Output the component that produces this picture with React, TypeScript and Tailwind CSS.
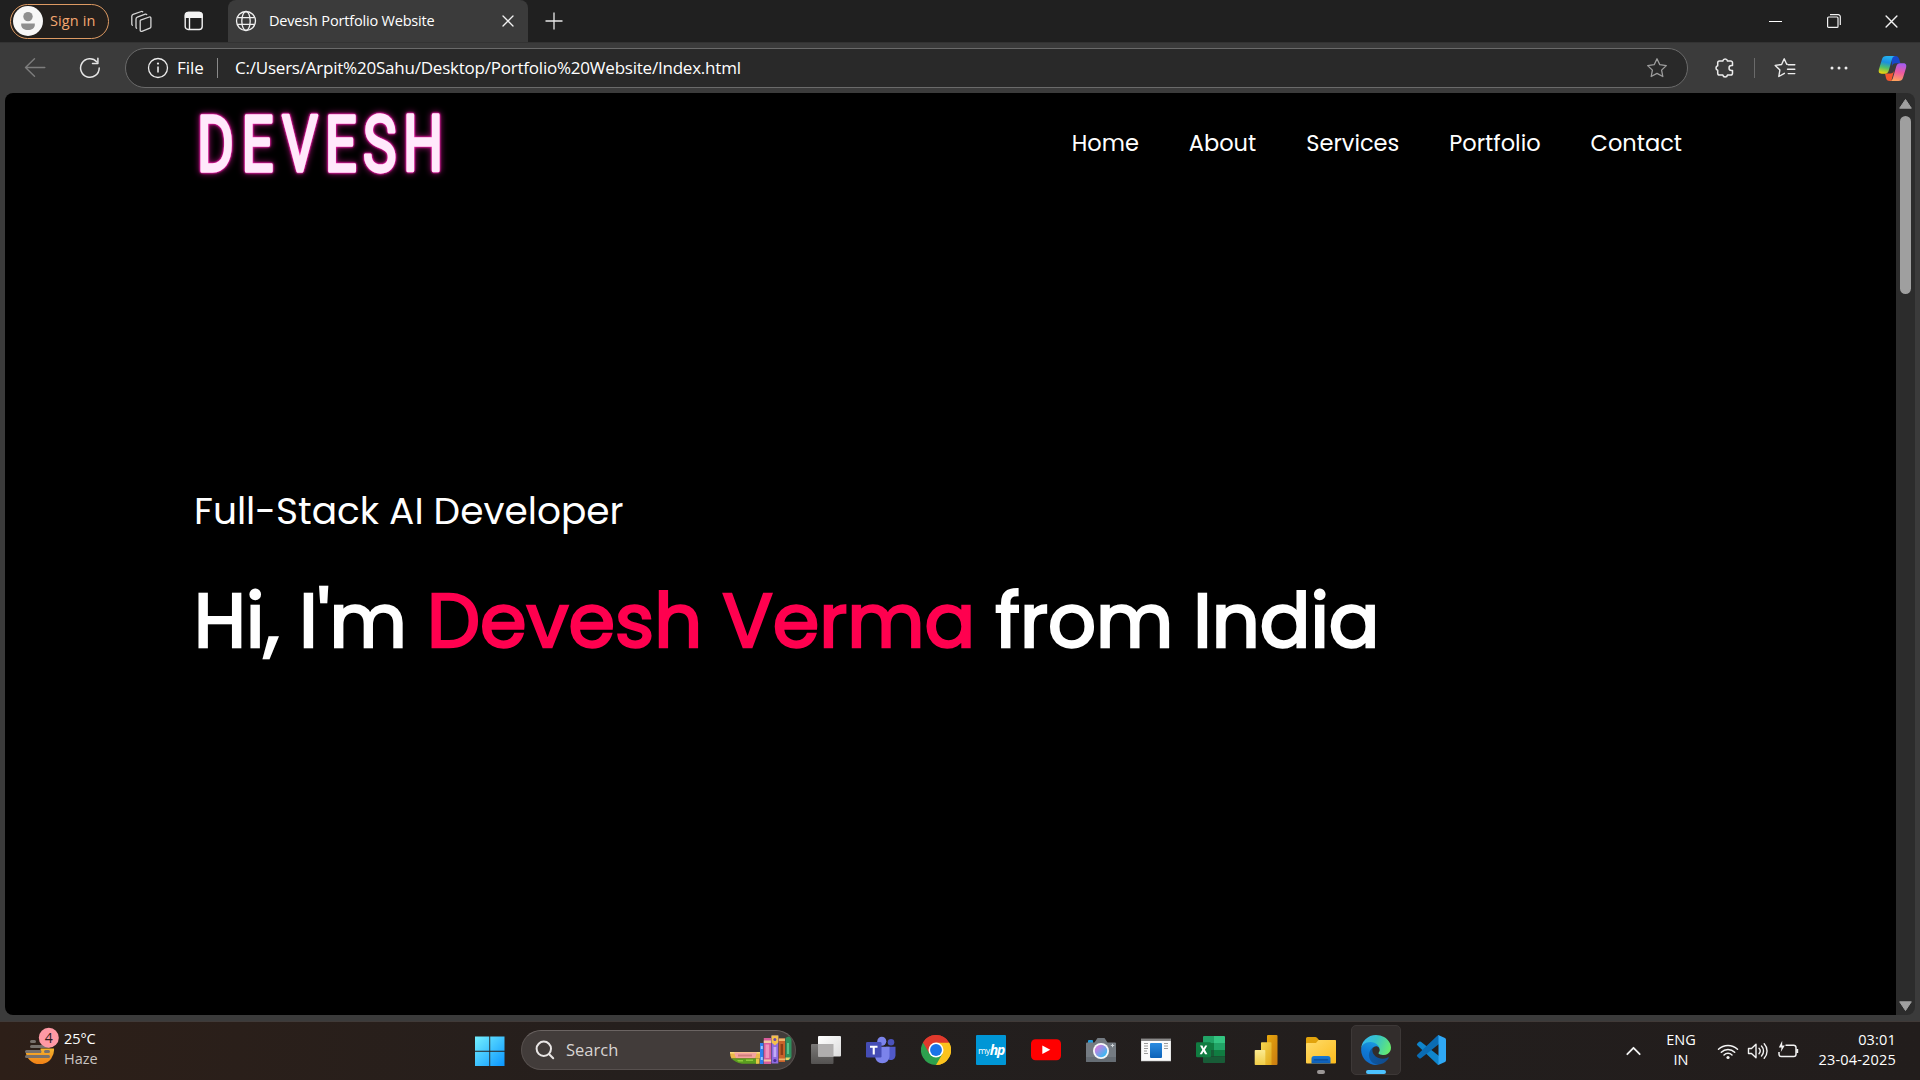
import type { ReactNode } from "react";

/* ---------- Browser icons ---------- */

const AvatarIcon = () => (
  <svg className="size-[30px] shrink-0" viewBox="0 0 30 30">
    <circle cx="15" cy="15" r="15" fill="#f7f7f7" />
    <circle cx="15" cy="10.6" r="4.7" fill="#8f8f8f" />
    <path d="M8.2 17.5h13.6v1.5c0 3-3 5-6.8 5s-6.8-2-6.8-5z" fill="#8f8f8f" />
  </svg>
);

const WorkspacesIcon = () => (
  <svg className="size-[24px]" viewBox="0 0 24 24" fill="none" stroke="#d6d6d6" strokeWidth="1.3" strokeLinejoin="round" strokeLinecap="round">
    <path d="M11.5 11.2l8.8-3.2a1.2 1.2 0 0 1 1.6 1.1v8.6a1.6 1.6 0 0 1-1 1.5l-8 3.1a1.2 1.2 0 0 1-1.7-1.1v-8.6a1.5 1.5 0 0 1 .3-1.4z" />
    <path d="M7.6 19.2a1.6 1.6 0 0 1-.6-1.3v-8a2 2 0 0 1 1.3-1.8l8-2.9a1.4 1.4 0 0 1 1.4.3" />
    <path d="M3.4 16.2a1.6 1.6 0 0 1-.6-1.3V7.2a2 2 0 0 1 1.3-1.8l8.2-2.9a1.4 1.4 0 0 1 1.4.3" />
  </svg>
);

const TabActionsIcon = () => (
  <svg className="size-[20px]" viewBox="0 0 20 20" fill="none" stroke="#f2f2f2" strokeWidth="1.4">
    <rect x="1.2" y="1.5" width="17" height="17" rx="3" />
    <path d="M1.5 4.5a3 3 0 0 1 3-3h10.5a3 3 0 0 1 3 3v1.8h-16.5z" fill="#f2f2f2" />
    <path d="M5.5 6.500v12" />
  </svg>
);

const GlobeIcon = () => (
  <svg className="size-[22px] shrink-0" viewBox="0 0 22 22" fill="none" stroke="#f0f0f0" strokeWidth="1.3">
    <circle cx="11" cy="11" r="9.5" />
    <ellipse cx="11" cy="11" rx="4.2" ry="9.5" />
    <path d="M2.3 7.7h17.400M2.3 14.3h17.4" />
  </svg>
);

const CloseIcon = ({ size }: { size: "sm" | "md" }) => (
  <svg className={size === "sm" ? "size-[12px]" : "size-[13px]"} viewBox="0 0 12 12" fill="none" stroke="#f2f2f2" strokeWidth="1.3" strokeLinecap="round">
    <path d="M1 1l10 10M11 1L1 11" />
  </svg>
);

const PlusIcon = () => (
  <svg className="size-[18px]" viewBox="0 0 18 18" fill="none" stroke="#e8e8e8" strokeWidth="1.3">
    <path d="M9 .5v17M.5 9h17" />
  </svg>
);

const BackIcon = () => (
  <svg className="size-[22px]" viewBox="0 0 22 22" fill="none" stroke="#7d7d7d" strokeWidth="1.4" strokeLinecap="round" strokeLinejoin="round">
    <path d="M20.8 10.5H1.5M10.5 1.8L1.5 10.5l9 8.700" />
  </svg>
);

const ReloadIcon = () => (
  <svg className="size-[22px]" viewBox="0 0 22 22" fill="none" stroke="#e6e6e6" strokeWidth="1.5" strokeLinecap="round" strokeLinejoin="round">
    <path d="M20.2 11a9.3 9.3 0 1 1-2.3-6.1" />
    <path d="M18.9 1.3v5.2h-5.4" />
  </svg>
);

const InfoIcon = () => (
  <svg className="size-[22px] shrink-0" viewBox="0 0 22 22" fill="none" stroke="#ececec" strokeWidth="1.3">
    <circle cx="11" cy="11" r="9.5" />
    <path d="M11 9.5v6" strokeWidth="1.6" />
    <circle cx="11" cy="6.6" r="1.1" fill="#ececec" stroke="none" />
  </svg>
);

const StarIcon = () => (
  <svg className="size-[22px]" viewBox="0 0 22 22" fill="none" stroke="#9d9d9d" strokeWidth="1.3" strokeLinejoin="round">
    <path d="M11 1.8l2.8 5.9 6.500.9-4.7 4.5 1.2 6.4-5.8-3.100-5.8 3.100 1.200-6.400L1.7 8.600l6.500-.9z" />
  </svg>
);

const ExtensionsIcon = () => (
  <svg className="size-[22px]" viewBox="0 0 22 22" fill="none" stroke="#ececec" strokeWidth="1.5" strokeLinejoin="round">
    <path d="M5.500 4h3.300a2.400 2.400 0 0 1 4.700 0h3.200a1.800 1.800 0 0 1 1.800 1.800v2.700h-1a2.500 2.500 0 0 0 0 5h1v2.700a1.800 1.800 0 0 1-1.800 1.800h-3.200a2.400 2.400 0 0 1-4.700 0H5.500a1.800 1.800 0 0 1-1.800-1.800v-2.900a2.400 2.400 0 0 1 0-4.600V5.800A1.800 1.800 0 0 1 5.500 4z" />
  </svg>
);

const FavoritesIcon = () => (
  <svg className="size-[22px]" viewBox="0 0 22 22" fill="none" stroke="#ececec" strokeWidth="1.4" strokeLinejoin="round" strokeLinecap="round">
    <path d="M13.3 7.2h-.6L10.2 1.8 7.6 7.5l-6.4.9 4.7 4.5-1.1 6.6 5.6-3.2" />
    <path d="M14.2 7.8h6.6M13.5 12.2h7.3M14.2 16.6h6.6" />
  </svg>
);

const MoreIcon = () => (
  <svg className="h-[4px] w-[18px]" viewBox="0 0 18 4" fill="#ececec">
    <circle cx="2" cy="2" r="1.5" />
    <circle cx="9" cy="2" r="1.5" />
    <circle cx="16" cy="2" r="1.5" />
  </svg>
);

const CopilotIcon = () => (
  <svg className="h-[27px] w-[29px]" viewBox="0 0 29 27">
    <defs>
      <linearGradient id="cpA" x1="0.5" y1="0" x2="0.3" y2="1">
        <stop offset="0" stopColor="#25b2f0" />
        <stop offset=".35" stopColor="#1a8fe0" />
        <stop offset=".65" stopColor="#4fc06a" />
        <stop offset="1" stopColor="#f2d40a" />
      </linearGradient>
      <linearGradient id="cpB" x1="0.6" y1="0" x2="0.4" y2="1">
        <stop offset="0" stopColor="#a45cf0" />
        <stop offset=".5" stopColor="#ee5a9e" />
        <stop offset="1" stopColor="#ffa35c" />
      </linearGradient>
    </defs>
    <path d="M13.5 1h3.7c2.3 0 3.3 1.2 3.9 3l1.3 4.2h-4.8c-2 0-3.1 1.2-3.7 3z" fill="#1848c9" />
    <path d="M7 18.5h5.5c1.9 0 3-1 3.6-3L13.3 26h-1.5c-2.4 0-3.3-1.2-3.8-3z" fill="#f4552e" />
    <path d="M8.5 1h8.3c-1.6.3-2.3 1.6-2.8 3.3l-3.3 11.4c-.6 2-1.8 3-3.7 3H3.8C1 18.7.2 16.8 1 14L4 4.2C4.7 2 6 1 8.5 1z" fill="url(#cpA)" />
    <path d="M20.5 26h-8.3c1.6-.3 2.3-1.6 2.8-3.3l3.3-11.4c.6-2 1.8-3 3.7-3h3.2c2.8 0 3.6 1.9 2.8 4.7l-3 9.8C24.3 25 23 26 20.5 26z" fill="url(#cpB)" />
  </svg>
);

/* ---------- Taskbar icons ---------- */

const WeatherIcon = () => (
  <svg className="h-[38px] w-[36px] shrink-0" viewBox="24 1026 36 38">
    <defs>
      <linearGradient id="sun" x1="0" y1="0" x2="0" y2="1">
        <stop offset="0" stopColor="#f5b52e" />
        <stop offset="1" stopColor="#f07f16" />
      </linearGradient>
    </defs>
    <path d="M40.500 1048.5h13.500a14.300 14.300 0 0 1-28.200 4.500h14.700z" fill="url(#sun)" />
    <path d="M31.5 1041.5h3M31.5 1046.5h17M26.5 1051.5h13.500M45.5 1051.5h3M26.5 1056.5h22" stroke="#77716c" strokeWidth="3" strokeLinecap="round" />
    <circle cx="48.8" cy="1037.7" r="10" fill="#ff99a4" />
    <text x="48.8" y="1043" textAnchor="middle" fontSize="14" fontFamily="Open Sans, sans-serif" fill="#2b1a1c">4</text>
  </svg>
);

const WindowsIcon = () => (
  <svg className="size-[30px]" viewBox="0 0 30 30">
    <defs>
      <linearGradient id="win" x1="0" y1="0" x2="1" y2="1">
        <stop offset="0" stopColor="#74f0ff" />
        <stop offset="1" stopColor="#0a96ff" />
      </linearGradient>
    </defs>
    <path d="M0 .5h14.300v14.300H0zM15.200.5h14.300v14.300H15.200zM0 15.700h14.300V30H0zM15.200 15.700h14.300V30H15.200z" fill="url(#win)" />
  </svg>
);

const SearchIcon = () => (
  <svg className="size-[20px] shrink-0" viewBox="0 0 20 20" fill="none" stroke="#e9e6e5" strokeWidth="2" strokeLinecap="round">
    <circle cx="8.8" cy="8.8" r="7.2" />
    <path d="M14.2 14.2l4 4" />
  </svg>
);

const BooksIcon = () => (
  <svg className="h-[30px] w-[63px] shrink-0" viewBox="0 0 63 30">
    <path d="M0 17h30v6.500H1.500Q0 21 0 17z" fill="#eab84a" />
    <path d="M0 17h30v1.500H0z" fill="#f8dc80" />
    <path d="M4 17.5h23l-2 5.500H6z" fill="#f4a3a0" />
    <path d="M8 19.500h14v2H8z" fill="#d17f7c" />
    <path d="M1.500 23.500H28v5.300H12Q5 27.500 1.500 23.500z" fill="#5b9e1f" />
    <path d="M7 25h6v1.500H8.500zM16 24.500h7v1.500h-7z" fill="#8ecb3a" />
    <path d="M26 23.500h3.500v5.300H26z" fill="#e7c545" />
    <path d="M30 8h3.500v21H30z" fill="#2d7ff0" />
    <path d="M30.800 11h2v3h-2zM30.800 22h2v3h-2z" fill="#9cc7ff" />
    <path d="M33.800 3h7.200v26h-7.200z" fill="#d95d9c" />
    <path d="M33.800 5.500H41v2.500h-7.200zM33.800 24.500H41v2h-7.200z" fill="#f5c9a0" />
    <path d="M35.500 9.500h3.700v13.500h-3.700z" fill="#ee93bd" />
    <path d="M41.500.5h6.800v28h-6.800z" fill="#8f6be0" />
    <path d="M41.500.5h6.800v7l-3.400 3-3.400-3z" fill="#f3c14b" />
    <circle cx="44.900" cy="4.500" r="1.500" fill="#6b4aa8" />
    <path d="M43.500 12h2.800v10h-2.800z" fill="#c3abf5" />
    <circle cx="44.900" cy="25.500" r="1.600" fill="#4a2f96" />
    <path d="M48.800 3.500H55V27h-6.200z" fill="#c8632b" />
    <path d="M48.800 3.500H55v2.500h-6.200zM48.800 23.500H55v1.700h-6.200z" fill="#f0b46b" />
    <path d="M50.600 9h2.500v11h-2.500z" fill="#8c3d17" />
    <path d="M55.500 3q4.500-4 6 2v17q-1.500 4-6 3.500z" fill="#2f8f5d" />
    <path d="M57 8h2v11h-2z" fill="#57c08a" />
    <path d="M55.500 22.500h5l-2 2.500h-3z" fill="#e5d66a" />
  </svg>
);

const TaskViewIcon = () => (
  <svg className="size-[30px]" viewBox="0 0 30 30">
    <defs>
      <linearGradient id="tv" x1="0" y1="0" x2="1" y2="1">
        <stop offset="0" stopColor="#ffffff" />
        <stop offset="1" stopColor="#dcdcdc" />
      </linearGradient>
      <linearGradient id="tv2" x1="0" y1="0" x2="0" y2="1">
        <stop offset="0" stopColor="#7a7877" />
        <stop offset="1" stopColor="#545251" />
      </linearGradient>
    </defs>
    <rect x="0" y="9" width="22.5" height="20" rx="1" fill="url(#tv2)" />
    <rect x="7" y="1" width="23" height="20.5" rx="1" fill="url(#tv)" />
    <rect x="7" y="9" width="15.5" height="12.5" fill="#b0aeae" />
  </svg>
);

const TeamsIcon = () => (
  <svg className="size-[30px]" viewBox="0 0 30 30">
    <circle cx="25" cy="7.3" r="3.3" fill="#4b53bc" />
    <path d="M20 11.8h9.5V20c0 3-2 5-4.8 5-2.2 0-4.7-1.5-4.7-5z" fill="#5059c9" />
    <circle cx="15.8" cy="6.2" r="4.5" fill="#7b83eb" />
    <path d="M9 11.8h14.5v9c0 4.5-3 7.5-7.2 7.5S9 25.3 9 20.8z" fill="#7b83eb" />
    <rect x="0" y="7" width="15.5" height="15.5" rx="1.3" fill="#454db5" />
    <path d="M4 10.8h7.5v1.9H8.8v6.8H6.7v-6.8H4z" fill="#fff" />
  </svg>
);

const ChromeIcon = () => (
  <svg className="size-[30px]" viewBox="0 0 48 48">
    <path d="M24 24L3.215 12A24 24 0 0 1 44.785 12z" fill="#e0392c" />
    <path d="M24 24L44.785 12A24 24 0 0 1 24 48z" fill="#fcc31e" />
    <path d="M24 24v24A24 24 0 0 1 3.215 12z" fill="#2da04e" />
    <path d="M34.392 30L24 48A24 24 0 0 0 44.785 12H24z" fill="#fcc31e" />
    <path d="M3.215 12L13.608 30 24 48l10.392-18L24 24V12z" fill="#2da04e" />
    <path d="M3.215 12A24 24 0 0 1 44.785 12H24L13.608 30z" fill="#e0392c" />
    <circle cx="24" cy="24" r="12" fill="#fff" />
    <circle cx="24" cy="24" r="9.5" fill="#1a73e8" />
  </svg>
);

const MyHpIcon = () => (
  <div className="flex size-[30px] items-center justify-center rounded-[1px] bg-[#0096d6] text-white">
    <span className="font-['Open_Sans',sans-serif] text-[9px] leading-none tracking-[-0.5px]">my</span>
    <span className="font-['Open_Sans',sans-serif] text-[14px] font-bold italic leading-none tracking-[-1.2px]">hp</span>
  </div>
);

const YouTubeIcon = () => (
  <svg className="size-[30px]" viewBox="0 0 30 30">
    <rect y="4.3" width="30" height="21" rx="4.5" fill="#ff0000" />
    <path d="M11.3 10.5l8 4.3-8 4.3z" fill="#fff" />
  </svg>
);

const CameraIcon = () => (
  <svg className="size-[30px]" viewBox="0 0 30 30">
    <defs>
      <linearGradient id="cam" x1="0" y1="0" x2="1" y2="1">
        <stop offset=".2" stopColor="#c77fe0" />
        <stop offset=".8" stopColor="#41b6f0" />
      </linearGradient>
    </defs>
    <rect x="2" y="5" width="5" height="4" rx="1" fill="#1e9de0" />
    <path d="M0 8.5q0-1 1-1h7.5l3-4.500h7l3 4.500H29q1 0 1 1V26q0 1-1 1H1q-1 0-1-1z" fill="#747b82" />
    <path d="M0 22h30v4q0 1-1 1H1q-1 0-1-1z" fill="#666d74" />
    <circle cx="15" cy="16" r="8" fill="#f5f7f9" />
    <circle cx="15" cy="16" r="6.2" fill="url(#cam)" />
    <path d="M26.5 8.8v3.4M24.8 10.5h3.4" stroke="#cfd4d8" strokeWidth="1" />
  </svg>
);

const ReaderIcon = () => (
  <svg className="size-[30px]" viewBox="0 0 30 30">
    <defs>
      <linearGradient id="rd" x1="0" y1="0" x2="0" y2="1">
        <stop offset="0" stopColor="#2a8be0" />
        <stop offset="1" stopColor="#0c62b8" />
      </linearGradient>
    </defs>
    <rect y="4" width="30" height="22" fill="#fbfbfb" stroke="#b9b9b9" strokeWidth=".6" />
    <path d="M0 4h30v2H0z" fill="#8b8a8a" />
    <rect x="9" y="8" width="12" height="15" rx="1" fill="url(#rd)" />
    <path d="M3 8.5h4M3 11h4M3 13.5h4M3 16h3M3 18.5h4M23 8.5h4M23 11h4M23 13.5h4" stroke="#9a9a9a" strokeWidth="1" />
  </svg>
);

const ExcelIcon = () => (
  <svg className="size-[30px]" viewBox="0 0 30 30">
    <path d="M7 2q0-1 1-1h10v7H7z" fill="#21a366" />
    <path d="M18 1h10q1 0 1 1v6H18z" fill="#33c481" />
    <path d="M7 8h11v7H7z" fill="#107c41" />
    <path d="M18 8h11v7H18z" fill="#21a366" />
    <path d="M7 15h11v6.5H7z" fill="#185c37" />
    <path d="M18 15h11v6.5H18z" fill="#107c41" />
    <path d="M7 21.5h22V27q0 1-1 1H8q-1 0-1-1z" fill="#185c37" />
    <rect y="7.3" width="15" height="15" rx="1.2" fill="#107c41" />
    <path d="M4 10.5h2.4l1.3 2.7 1.4-2.7h2.2L8.9 14.8l2.5 4.4H9l-1.500-2.8L6 19.2H3.7l2.6-4.4z" fill="#fff" />
  </svg>
);

const PowerBiIcon = () => (
  <svg className="size-[30px]" viewBox="0 0 30 30">
    <defs>
      <linearGradient id="pb1" x1="0" y1="0" x2="1" y2="1">
        <stop offset="0" stopColor="#e8a90c" />
        <stop offset="1" stopColor="#c87a12" />
      </linearGradient>
      <linearGradient id="pb2" x1="0" y1="0" x2="1" y2="1">
        <stop offset="0" stopColor="#f6d751" />
        <stop offset="1" stopColor="#e0a81c" />
      </linearGradient>
      <linearGradient id="pb3" x1="0" y1="0" x2="0" y2="1">
        <stop offset="0" stopColor="#fbea90" />
        <stop offset="1" stopColor="#f0cd48" />
      </linearGradient>
    </defs>
    <path d="M16 1q0-1 1-1h8.5q1 0 1 1v28q0 1-1 1H16z" fill="url(#pb1)" />
    <path d="M10 8q0-.8.8-.8h8.9q.8 0 .8.8v22H10z" fill="url(#pb2)" />
    <path d="M3.7 15.8q0-.8.8-.8H13.5q.8 0 .8.8V30H4.5q-.8 0-.8-.8z" fill="url(#pb3)" />
  </svg>
);

const ExplorerIcon = () => (
  <svg className="size-[30px]" viewBox="0 0 30 30">
    <defs>
      <linearGradient id="fx" x1="0" y1="0" x2="1" y2="1">
        <stop offset="0" stopColor="#ffdc6b" />
        <stop offset="1" stopColor="#fcbb1c" />
      </linearGradient>
      <linearGradient id="fb" x1="0" y1="0" x2="0" y2="1">
        <stop offset="0" stopColor="#1a7ad6" />
        <stop offset="1" stopColor="#0d5cb4" />
      </linearGradient>
    </defs>
    <path d="M0 3.5Q0 2 1.5 2h7.7q1 0 1.8.8L13 5h15.5Q30 5 30 6.5V15H0z" fill="#e2a30c" />
    <path d="M0 9q0-1 1-1h9l2.5-3H29q1 0 1 1v21.5q0 1-1 1H1q-1 0-1-1z" fill="url(#fx)" />
    <path d="M5.5 23.5Q5.5 21 8 21h14q2.500 0 2.500 2.500v5H5.500z" fill="url(#fb)" />
    <path d="M8.5 24.8h13" stroke="#0a4b98" strokeWidth="1.3" strokeLinecap="round" />
  </svg>
);

const EdgeIcon = () => (
  <svg className="size-[30px]" viewBox="0 0 256 256">
    <defs>
      <linearGradient id="e1" x1="0" y1=".5" x2="1" y2=".7">
        <stop offset="0" stopColor="#0c59a4" />
        <stop offset="1" stopColor="#114a8b" />
      </linearGradient>
      <linearGradient id="e2" x1=".6" y1="0" x2=".3" y2="1">
        <stop offset="0" stopColor="#1b9de2" />
        <stop offset=".5" stopColor="#0f78d4" />
        <stop offset="1" stopColor="#1068c4" />
      </linearGradient>
      <linearGradient id="e3" x1="0" y1=".3" x2="1" y2=".6">
        <stop offset="0" stopColor="#35b8f1" />
        <stop offset=".45" stopColor="#36c3c9" />
        <stop offset="1" stopColor="#66eb6e" />
      </linearGradient>
    </defs>
    <path d="M231 190.5c-3.4 1.8-6.9 3.4-10.5 4.7a101.5 101.5 0 0 1-35.7 6.4c-47 0-88-32.3-88-73.8.1-11.6 6.5-22.2 16.6-27.7-42.5 1.8-53.4 46.1-53.4 72 0 73.4 67.6 80.8 82.2 80.8 7.8 0 19.7-2.3 26.8-4.5l1.300-.5a128.300 128.300 0 0 0 66.600-52.700 4 4 0 0 0-5.900-4.700z" fill="url(#e1)" />
    <path d="M105.7 241.4a79.2 79.2 0 0 1-22.7-21.3A80.7 80.7 0 0 1 113.4 100c3.2-1.5 8.5-4.1 15.6-4 10.200.1 19.7 4.9 25.8 13 4.1 5.4 6.3 11.9 6.4 18.7 0-.2 24.5-79.6-80-79.6C37.3 48 1.2 89.7 1.2 126.2A130 130 0 0 0 13.3 182a128 128 0 0 0 156.4 67.1 75.5 75.5 0 0 1-64-7.7z" fill="url(#e2)" />
    <path d="M152.3 148.9c-.8 1-3.3 2.5-3.3 5.7 0 2.6 1.7 5.1 4.7 7.2 14.4 10 41.5 8.7 41.6 8.7 10.7 0 21.1-2.900 30.300-8.300a61.400 61.400 0 0 0 30.400-52.900c.3-22.400-8-37.300-11.300-43.900C223.500 23.900 177.700 0 128 0A128 128 0 0 0 0 126.200c.5-36.500 36.800-66 80-66 3.500 0 23.500.3 42 10.100 16.300 8.600 24.900 19 30.800 29.200 6.200 10.700 7.300 24.100 7.300 29.500 0 5.400-2.700 13.300-7.800 19.900z" fill="url(#e3)" />
  </svg>
);

const VsCodeIcon = () => (
  <svg className="size-[30px]" viewBox="0 0 30 30">
    <path d="M1.3 10.3Q.3 9.4 1.3 8.4l1.8-1.6q.9-.7 1.8 0L23 21v8.7q-.8.3-1.700-.5z" fill="#0f85cc" />
    <path d="M1.3 19.7q-1 .9 0 1.9l1.8 1.6q.9.7 1.8 0L23 9V.3q-.8-.3-1.7.5z" fill="#0a6cb4" />
    <path d="M22.8 29.8q-.9.2-1.6-.5 1.300.9 1.300-.9V1.600q0-1.800-1.300-.9.7-.7 1.600-.5l6.200 2.900q1 .5 1 1.600v20.600q0 1.100-1 1.600z" fill="#2fa8f5" />
  </svg>
);

const WifiIcon = () => (
  <svg className="h-[17px] w-[22px]" viewBox="0 0 22 17" fill="none" stroke="#f2f2f2" strokeWidth="1.5" strokeLinecap="round">
    <path d="M1.5 6.3a13.5 13.5 0 0 1 19 0M4.3 9.3a9.5 9.5 0 0 1 13.4 0M7 12a5.7 5.7 0 0 1 8 0" />
    <circle cx="11" cy="14.5" r="1.6" fill="#f2f2f2" stroke="none" />
  </svg>
);

const VolumeIcon = () => (
  <svg className="h-[18px] w-[22px]" viewBox="0 0 22 18" fill="none" stroke="#f2f2f2" strokeWidth="1.4" strokeLinecap="round" strokeLinejoin="round">
    <path d="M1.5 6.5h3L9 2.3v13.4l-4.500-4.200h-3z" />
    <path d="M12 6.3a4 4 0 0 1 0 5.4M14.5 4a7.2 7.2 0 0 1 0 10M17.2 1.8a10.5 10.5 0 0 1 0 14.4" />
  </svg>
);

const BatteryIcon = () => (
  <svg className="h-[20px] w-[23px]" viewBox="0 0 23 20" fill="none" stroke="#f2f2f2" strokeWidth="1.5" strokeLinejoin="round">
    <path d="M8.5 5.2h8.2a2.3 2.3 0 0 1 2.3 2.3v6.7a2.3 2.3 0 0 1-2.3 2.3H4.3A2.3 2.3 0 0 1 2 14.2V12" />
    <path d="M20.2 9v4" strokeWidth="2" />
    <path d="M5.2.8L1.8 7.5h2.7l-.7 4.5 4-6.5H5.2z" fill="#f2f2f2" stroke="none" />
  </svg>
);

/* ---------- Browser chrome ---------- */

const TitleBar = () => (
  <div className="flex h-[42px] bg-[#202020]">
    <div className="flex w-[228px] shrink-0 items-center pl-[10px]">
      <div className="flex h-[35px] w-[99px] items-center gap-[7px] rounded-full border-[1.5px] border-[#dd9a63] bg-[#231f1c] pl-[2px]">
        <AvatarIcon />
        <span className="whitespace-nowrap text-[14.5px] tracking-[0.1px] text-[#f3a770]">Sign in</span>
      </div>
      <div className="ml-[20px] flex"><WorkspacesIcon /></div>
      <div className="ml-[31px] flex"><TabActionsIcon /></div>
    </div>
    <div className="flex w-[300px] shrink-0 items-center rounded-t-[8px] bg-[#3b3b3b] pl-[7px] pr-[14px]">
      <GlobeIcon />
      <span className="ml-[12px] grow whitespace-nowrap text-[14.5px] tracking-[-0.18px] text-white">Devesh Portfolio Website</span>
      <CloseIcon size="sm" />
    </div>
    <div className="ml-[17px] flex items-center"><PlusIcon /></div>
    <div className="ml-auto flex items-center">
      <div className="mr-[45px] h-px w-[13px] bg-white" />
      <svg className="mr-[44px] size-[14px]" viewBox="0 0 14 14" fill="none" stroke="#f2f2f2" strokeWidth="1.2">
        <rect x=".6" y="3" width="10.4" height="10.4" rx="1" />
        <path d="M3 .7h8.2a2.1 2.1 0 0 1 2.1 2.1V11" />
      </svg>
      <div className="mr-[22px] flex"><CloseIcon size="md" /></div>
    </div>
  </div>
);

const ToolBar = () => (
  <div className="flex h-[51px] items-center border-t border-[#333333]">
    <div className="ml-[24px] flex"><BackIcon /></div>
    <div className="ml-[33px] flex"><ReloadIcon /></div>
    <div className="ml-[24px] flex h-[40px] w-[1563px] items-center rounded-full border border-[#6a6a6a] bg-[#292929] text-[17px] text-white">
      <div className="ml-[21px] flex"><InfoIcon /></div>
      <span className="ml-[8px] w-[27px]">File</span>
      <div className="ml-[13px] h-[20px] w-px bg-[#8a8a8a]" />
      <span className="ml-[17px] grow whitespace-nowrap tracking-[-0.22px]">C:/Users/Arpit%20Sahu/Desktop/Portfolio%20Website/Index.html</span>
      <div className="mr-[19px] flex"><StarIcon /></div>
    </div>
    <div className="ml-[26px] flex"><ExtensionsIcon /></div>
    <div className="ml-[18px] h-[20px] w-px bg-[#6a6a6a]" />
    <div className="ml-[19px] flex"><FavoritesIcon /></div>
    <div className="ml-[34px] flex"><MoreIcon /></div>
    <div className="ml-[30px] flex"><CopilotIcon /></div>
  </div>
);

/* ---------- Web page ---------- */

const NeonLogo = () => (
  <svg className="h-[80px] w-[260px] overflow-visible" viewBox="190 103 260 80">
    <g className="[filter:drop-shadow(0_0_1px_#ff1fb4)_drop-shadow(0_0_0.5px_#e0189c)_drop-shadow(0_0_3px_#96106a)]">
      <text
        transform="scale(0.73 1)"
        x="269.9 330.8 386.3 444.9 497.3 552.1"
        y="171.2"
        fontFamily="Roboto, sans-serif"
        fontSize="77"
        fill="#ffe9fb"
        stroke="#ffe9fb"
        strokeWidth="3.4"
        strokeLinejoin="round"
      >
        DEVESH
      </text>
    </g>
  </svg>
);

const navLinks = ["Home", "About", "Services", "Portfolio", "Contact"];

const Page = () => (
  <main className="grow overflow-hidden rounded-l-[8px] bg-black font-['Poppins','Inter',sans-serif] text-white">
    <header className="flex h-[100px] items-center justify-between pl-[185px] pr-[214px]">
      <NeonLogo />
      <nav className="flex gap-[50px] pt-[2px] text-[22.5px]">
        {navLinks.map((link) => (
          <a key={link}>{link}</a>
        ))}
      </nav>
    </header>
    <section className="pl-[189px] pt-[290px]">
      <p className="text-[37.5px] leading-[56px]">Full-Stack AI Developer</p>
      <h1 className="mt-[22px] whitespace-nowrap text-[75px] leading-[120px] [-webkit-text-stroke-width:2.5px]">
        Hi, I'm <span className="text-[#ff004f]">Devesh Verma</span> from India
      </h1>
    </section>
  </main>
);

const ScrollBar = () => (
  <div className="flex w-[19px] shrink-0 flex-col items-center rounded-r-[8px] bg-[#2c2c2c] pb-[4px] pt-[6px]">
    <svg className="h-[10px] w-[13px]" viewBox="0 0 13 10"><path d="M6.5.5L12.3 9.200H.7z" fill="#a0a0a0" stroke="#a0a0a0" strokeLinejoin="round" /></svg>
    <div className="mt-[7px] h-[178px] w-[11px] rounded-full bg-[#9f9f9f]" />
    <svg className="mt-auto h-[10px] w-[13px]" viewBox="0 0 13 10"><path d="M6.5 9.500L12.3.8H.7z" fill="#a0a0a0" stroke="#a0a0a0" strokeLinejoin="round" /></svg>
  </div>
);

/* ---------- Taskbar ---------- */

const apps: { name: string; icon: ReactNode; state?: "open" | "active" }[] = [
  { name: "Task view", icon: <TaskViewIcon /> },
  { name: "Teams", icon: <TeamsIcon /> },
  { name: "Chrome", icon: <ChromeIcon /> },
  { name: "myHP", icon: <MyHpIcon /> },
  { name: "YouTube", icon: <YouTubeIcon /> },
  { name: "Camera", icon: <CameraIcon /> },
  { name: "Reader", icon: <ReaderIcon /> },
  { name: "Excel", icon: <ExcelIcon /> },
  { name: "Power BI", icon: <PowerBiIcon /> },
  { name: "Explorer", icon: <ExplorerIcon />, state: "open" },
  { name: "Edge", icon: <EdgeIcon />, state: "active" },
  { name: "VS Code", icon: <VsCodeIcon /> },
];

const TaskBar = () => (
  <footer className="flex h-[59px] border-t border-[#403a38] bg-linear-to-r from-[#2d1f18] via-[#231f1e] via-40% to-[#221d1c] text-[14.5px] text-white">
    <div className="flex w-[475px] shrink-0 pl-[24px] pt-[4px]">
      <WeatherIcon />
      <div className="ml-[4px] pt-[3px] leading-[20px]">
        <p className="tracking-[-0.1px]">25°C</p>
        <p className="text-[#c9c4c1]">Haze</p>
      </div>
    </div>
    <div className="flex w-[46px] shrink-0 pt-[13.5px]"><WindowsIcon /></div>
    <div className="mt-[8px] flex h-[40px] w-[275px] shrink-0 items-center rounded-full border border-[#57504e] border-t-[#6b6462] bg-[#423c3a] pl-[13px]">
      <SearchIcon />
      <span className="ml-[11px] grow text-[16.5px] text-[#d8d4d2]">Search</span>
      <div className="mr-[2px] flex"><BooksIcon /></div>
    </div>
    <div className="ml-[5px] flex gap-[5px] pt-[3px]">
      {apps.map((app) => (
        <div
          key={app.name}
          className={
            app.state === "active"
              ? "relative flex size-[50px] justify-center rounded-[5px] border border-[#3d3837] bg-[#322d2c] pt-[9px]"
              : "relative flex size-[50px] justify-center pt-[10px]"
          }
        >
          {app.icon}
          {app.state === "open" && <div className="absolute bottom-[1px] left-[21px] h-[4px] w-[8px] rounded-full bg-[#9b9796]" />}
          {app.state === "active" && <div className="absolute bottom-0 left-[14px] h-[4px] w-[20px] rounded-full bg-[#4cc2ff]" />}
        </div>
      ))}
    </div>
    <div className="ml-auto flex items-center pr-[24px] leading-[20px]">
      <svg className="h-[10px] w-[15px]" viewBox="0 0 15 10" fill="none" stroke="#f2f2f2" strokeWidth="1.8" strokeLinecap="round" strokeLinejoin="round">
        <path d="M1.3 8.2L7.5 1.8l6.2 6.4" />
      </svg>
      <div className="ml-[24px] w-[32px] pb-[2px] text-center">
        <p>ENG</p>
        <p>IN</p>
      </div>
      <div className="ml-[20px] flex"><WifiIcon /></div>
      <div className="ml-[8px] flex"><VolumeIcon /></div>
      <div className="ml-[8px] flex pb-[3px]"><BatteryIcon /></div>
      <div className="ml-[15px] w-[81px] pb-[3px] text-right tracking-[0.18px]">
        <p>03:01</p>
        <p>23-04-2025</p>
      </div>
    </div>
  </footer>
);

export default function App() {
  return (
    <div className="flex h-[1080px] w-[1920px] flex-col overflow-hidden bg-[#3b3b3b] font-['Open_Sans','Noto_Sans',sans-serif]">
      <TitleBar />
      <ToolBar />
      <div className="mb-[6px] flex min-h-0 grow pl-[5px] pr-[5px]">
        <Page />
        <ScrollBar />
      </div>
      <TaskBar />
    </div>
  );
}
